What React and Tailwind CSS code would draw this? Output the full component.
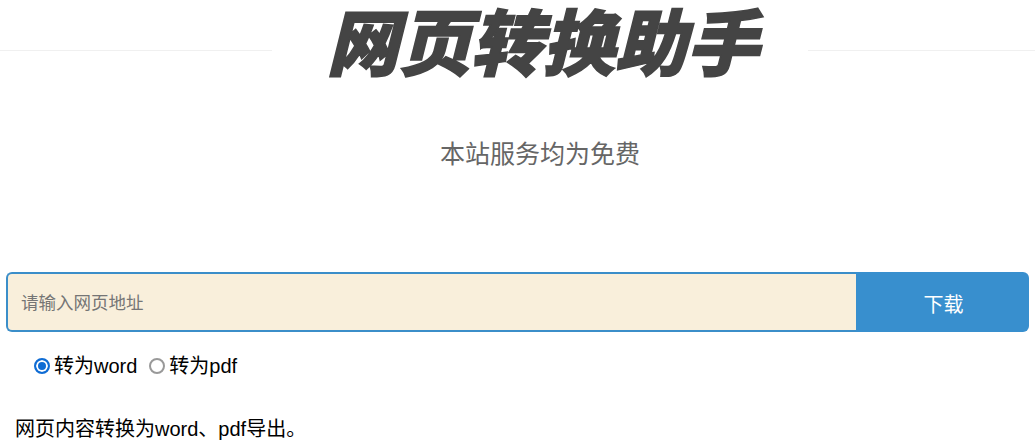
import React, { useState } from 'react';

const cjk = '"Liberation Sans","Noto Sans CJK SC",sans-serif';

const radioClass = 'w-4 h-4 mr-1 appearance-none rounded-full border-2 border-[#999] bg-white checked:border-[#0f6cd4] checked:bg-[#0f6cd4] checked:shadow-[inset_0_0_0_2px_white]';

const App = () => {
  const [format, setFormat] = useState('word');

  return (
    <div className="w-[1035px] h-[446px] overflow-hidden bg-white" style={{ fontFamily: cjk }}>
      <div className="flex items-start h-[90px]">
        <div className="w-[272px] mt-[50px] h-px bg-[#f0f0f0]" />
        <h1 className="w-[536px] pl-[5px] text-center text-[72px] leading-[90px] font-black italic text-[#444] [-webkit-text-stroke:1.5px_#444]">网页转换助手</h1>
        <div className="flex-1 mt-[50px] h-px bg-[#f0f0f0]" />
      </div>
      <p className="mt-[46px] pl-[45px] text-center text-[25px] leading-9 text-[#666]">本站服务均为免费</p>
      <div className="flex mt-[100px] mx-[6px] h-[60px]">
        <input
          placeholder="请输入网页地址"
          className="flex-1 pl-[13px] pr-3 pt-[2px] border-2 border-r-0 border-[#3b8ec9] rounded-l-[6px] bg-[#f9efdb] text-[17.5px] text-[#333] placeholder:text-[#757575] outline-none"
        />
        <button className="w-[173px] pt-[5px] pl-[2px] rounded-r-[6px] bg-[#388fce] text-xl text-white">下载</button>
      </div>
      <div className="flex items-center mt-[20px] ml-[34px] text-xl leading-7 text-black">
        <label className="flex items-center">
          <input type="radio" name="format" checked={format === 'word'} onChange={() => setFormat('word')} className={radioClass} />
          转为word
        </label>
        <label className="flex items-center ml-3">
          <input type="radio" name="format" checked={format === 'pdf'} onChange={() => setFormat('pdf')} className={radioClass} />
          转为pdf
        </label>
      </div>
      <p className="mt-[35px] ml-[15px] text-xl leading-7 text-black">网页内容转换为word、pdf导出。</p>
    </div>
  );
};

export default App;
